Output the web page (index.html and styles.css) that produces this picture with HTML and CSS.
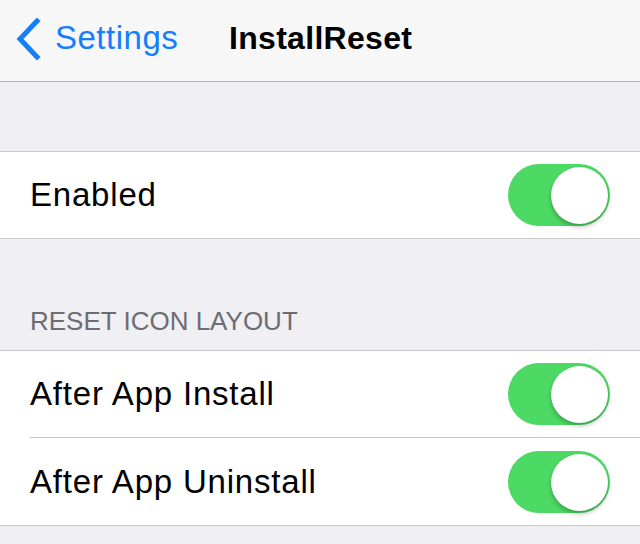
FILE: index.html
```html
<!DOCTYPE html>
<html>
<head>
<meta charset="utf-8">
<link rel="stylesheet" href="styles.css">
</head>
<body>
<header class="nav">
  <div class="back">
    <svg class="chev" width="26" height="42" viewBox="0 0 26 42"><path d="M22 3 L5 21 L22 39" fill="none" stroke="#157efb" stroke-width="5" stroke-linecap="square" stroke-linejoin="miter"/></svg>
    <span class="back-label">Settings</span>
  </div>
  <div class="title">InstallReset</div>
</header>
<div class="gap-top"></div>
<section class="group">
  <div class="row">
    <span class="label">Enabled</span>
    <span class="toggle"><span class="knob"></span></span>
  </div>
</section>
<div class="section-header">RESET ICON LAYOUT</div>
<section class="group">
  <div class="row">
    <span class="label">After App Install</span>
    <span class="toggle"><span class="knob"></span></span>
  </div>
  <div class="row inset">
    <span class="label">After App Uninstall</span>
    <span class="toggle"><span class="knob"></span></span>
  </div>
</section>
</body>
</html>
```
FILE: styles.css
```css
html, body {
  margin: 0;
  padding: 0;
}
body {
  background: #efeff4;
  font-family: "Liberation Sans", Arial, sans-serif;
  width: 640px;
  height: 544px;
  overflow: hidden;
}
.nav {
  height: 76px;
  padding-bottom: 5px;
  background: #f7f7f7;
  border-bottom: 1px solid #b2b2b2;
  display: flex;
  align-items: center;
  box-sizing: content-box;
}
.back {
  display: flex;
  align-items: center;
  padding-left: 15px;
  width: 214px;
  gap: 14px;
}
.chev {
  display: block;
  margin-top: 1px;
}
.back-label {
  color: #157efb;
  font-size: 33px;
  letter-spacing: 0.5px;
}
.title {
  font-size: 32px;
  font-weight: bold;
  color: #000;
  letter-spacing: 0.3px;
}
.gap-top {
  height: 69px;
}
.group {
  background: #fff;
  border-top: 1px solid #c8c7cc;
  border-bottom: 1px solid #c8c7cc;
}
.row {
  height: 86px;
  display: flex;
  align-items: center;
  justify-content: space-between;
  padding: 0 30px;
  position: relative;
}
.row.inset {
  height: 87px;
  border-top: 1px solid #c8c7cc;
  margin-left: 30px;
  padding-left: 0;
}
.label {
  font-size: 33px;
  letter-spacing: 0.8px;
  color: #000;
}
.toggle {
  width: 102px;
  height: 62px;
  border-radius: 31px;
  background: #4cd964;
  position: relative;
  flex: none;
}
.knob {
  position: absolute;
  right: 2px;
  top: 3px;
  width: 57px;
  height: 57px;
  border-radius: 50%;
  background: #fff;
  box-shadow: 0 3px 4px rgba(0,0,0,0.25), 0 0 1px rgba(0,0,0,0.15);
}
.section-header {
  height: 111px;
  box-sizing: border-box;
  padding: 67px 0 0 30px;
  font-size: 26px;
  color: #6d6d72;
  letter-spacing: 0;
  line-height: 30px;
}
```
